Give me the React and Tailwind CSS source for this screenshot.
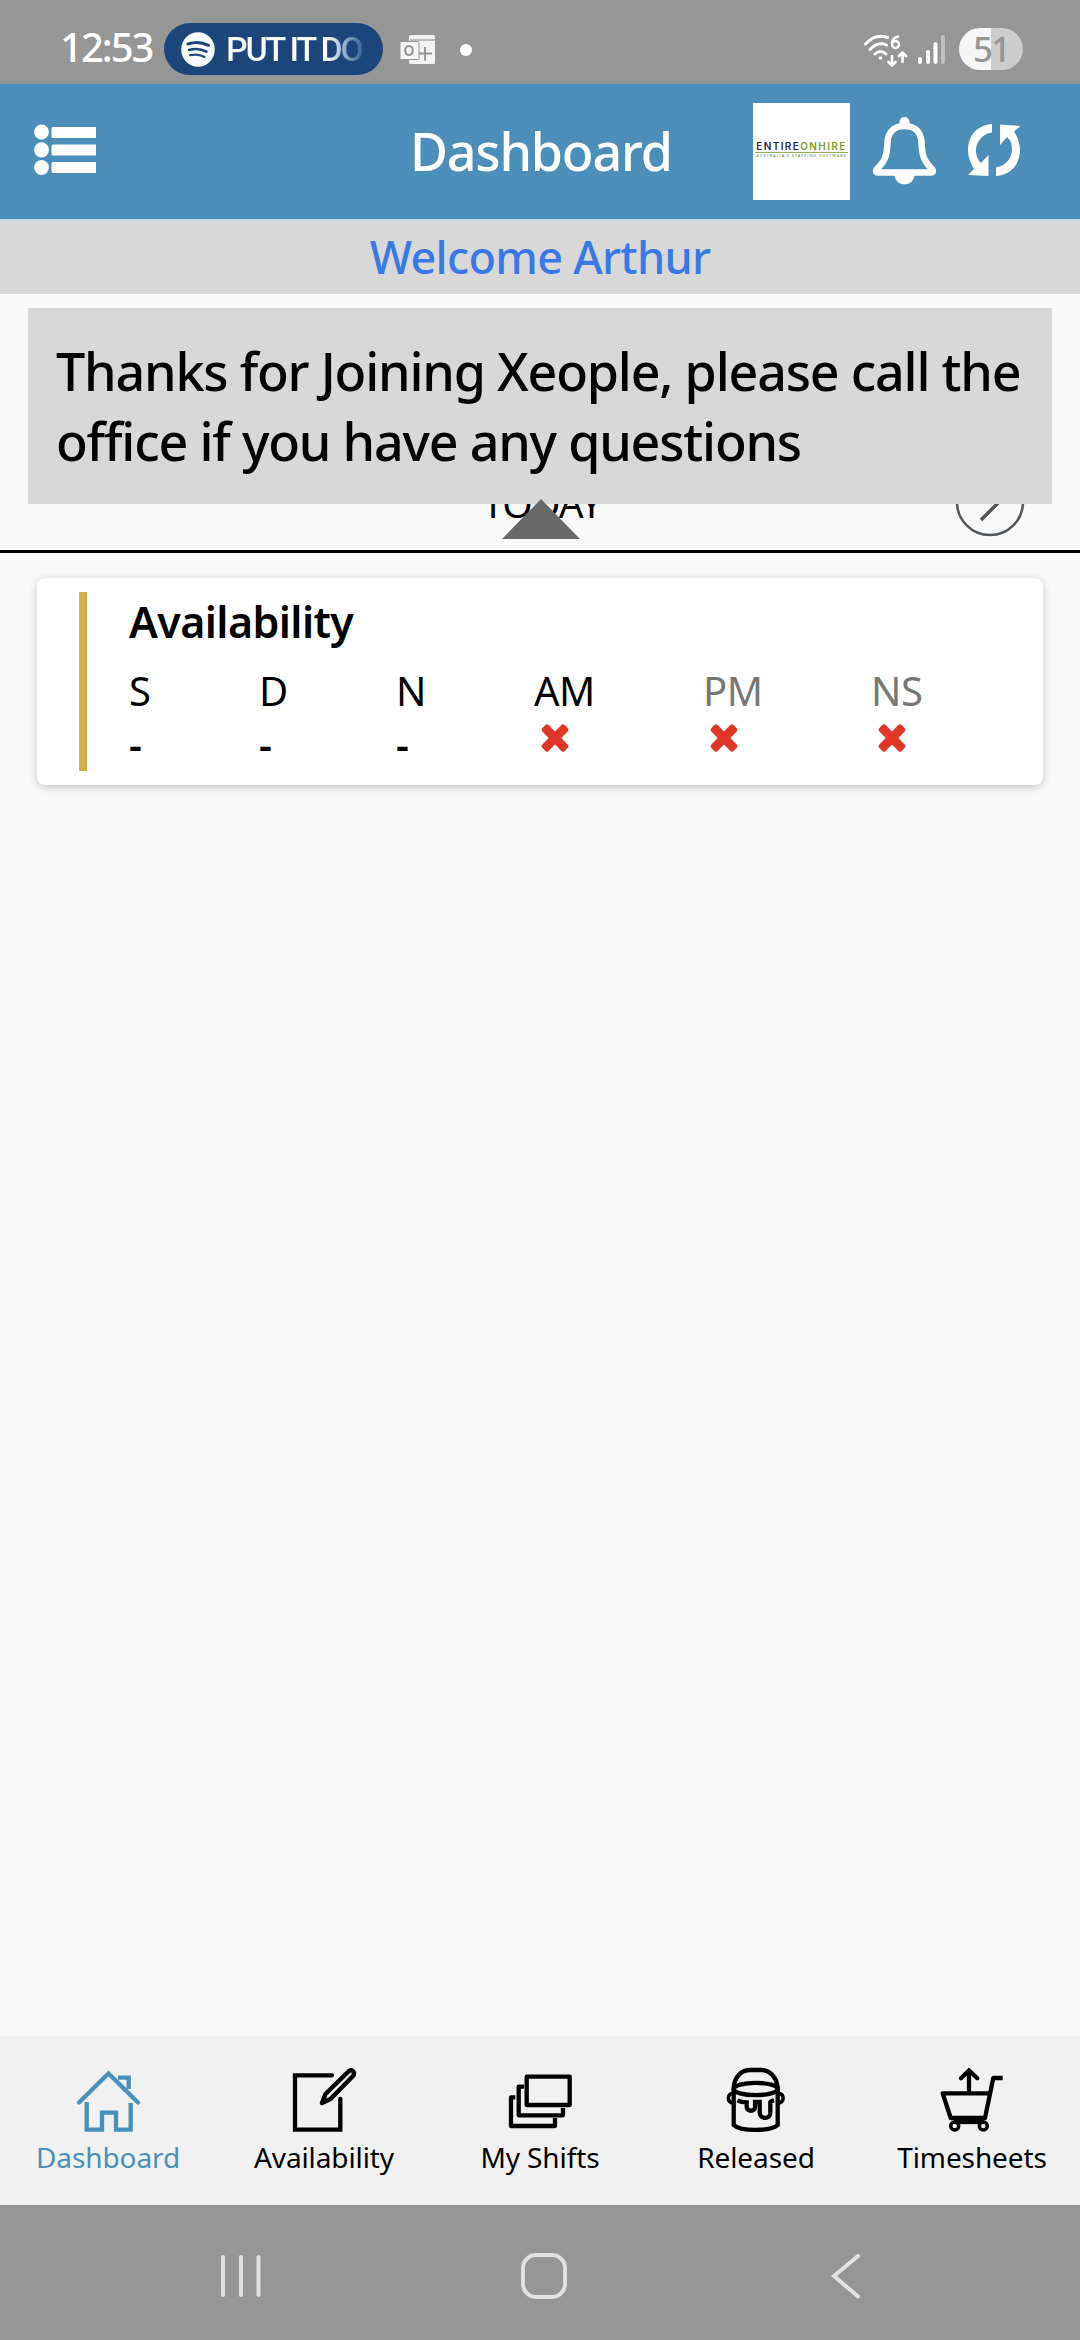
const slots = [
  { name: "S", active: true, value: "-" },
  { name: "D", active: true, value: "-" },
  { name: "N", active: true, value: "-" },
  { name: "AM", active: true, value: "x" },
  { name: "PM", active: false, value: "x" },
  { name: "NS", active: false, value: "x" },
];

function StatusBar() {
  return (
    <div className="flex h-[84px] items-start bg-[#969696] text-white">
      <span className="ml-[60px] mt-[19px] w-[104px] whitespace-nowrap text-[40px] font-medium leading-[56px] tracking-[-2px]">
        12:53
      </span>
      <div className="mt-[23px] flex h-[52px] w-[219px] items-center rounded-full bg-[#1c457c] pl-[17px]">
        <svg className="h-[35px] w-[34px]" viewBox="0 0 34 35" fill="none">
          <ellipse cx="17" cy="17.500" rx="16.800" ry="17.200" fill="#f8feff" />
          <g stroke="#1c457c" strokeLinecap="round">
            <path d="M7 12c7-2.500 14-1.800 20.500 1.300" strokeWidth="3" />
            <path d="M8 18c6-1.800 12-1.200 17.500 1.600" strokeWidth="2.500" />
            <path d="M9 23.300c5-1.300 10-.8 14.500 1.700" strokeWidth="2.100" />
          </g>
        </svg>
        <span className="ml-[11px] whitespace-nowrap bg-gradient-to-r from-[#f4fcff] from-75% to-[#3c6496] bg-clip-text font-['Roboto'] text-[34px] font-medium leading-[48px] tracking-[-2.2px] text-transparent">
          PUT IT DO
        </span>
      </div>
      {/* outlook */}
      <svg className="ml-[17px] mt-[35px] h-[29px] w-[35px]" viewBox="0 0 35 29">
        <path d="M9 1.500q0-1.500 1.500-1.500H33.500Q35 0 35 1.500V27.500Q35 29 33.500 29H10.500Q9 29 9 27.500Z" fill="#f2f2f2" />
        <path d="M10 5H35" stroke="#aaa" strokeWidth="1.500" />
        <path d="M19 18.500H32M25 12V25.500" stroke="#969696" strokeWidth="2" />
        <rect x="0" y="6.500" width="19" height="18" rx="1" fill="#f6f6f6" stroke="#969696" strokeWidth="1" />
        <ellipse cx="9" cy="15.500" rx="3.800" ry="4.500" fill="none" stroke="#969696" strokeWidth="2.200" />
      </svg>
      <div className="ml-[25px] mt-[44px] size-[12px] rounded-full bg-white" />
      <svg className="ml-[392px] mt-[33px] h-[34px] w-[44px]" viewBox="0 0 44 34" fill="none" stroke="#fff" strokeLinecap="round">
        <path d="M1.500 11Q11.500 0 23.500 4.500" strokeWidth="3" />
        <path d="M6 16.500Q14 8 22.500 12" strokeWidth="3" />
        <path d="M11 21Q16.500 16 22 21" strokeWidth="3" />
        <circle cx="16.500" cy="25" r="1.800" fill="#fff" stroke="none" />
        <path d="M34 3.500Q28 5 28 11" strokeWidth="2.500" />
        <circle cx="31.500" cy="11.500" r="3.500" strokeWidth="2.400" />
        <path d="M28 23V32M24.500 29L28 32.500L31.500 29M38.500 29V20M35 23L38.500 19.500L42 23" strokeWidth="2.600" />
      </svg>
      <svg className="ml-[10px] mt-[35px] h-[29px] w-[28px]" viewBox="0 0 28 29">
        <rect x="0" y="22" width="4" height="7" rx="2" fill="#fff" />
        <rect x="8" y="15" width="4" height="14" rx="2" fill="#fff" />
        <rect x="15.500" y="7" width="4" height="22" rx="2" fill="#fff" />
        <rect x="23" y="0" width="4" height="29" rx="2" fill="#c0c0c0" />
      </svg>
      <div className="ml-[13px] mt-[28px] flex h-[42px] w-[64px] items-center justify-center rounded-full bg-gradient-to-r from-[#f6f6f6] from-50% to-[#cdcdcd] to-50%">
        <span className="mb-[2px] text-[35px] font-medium leading-none tracking-[-2px] text-[#969696]">51</span>
      </div>
    </div>
  );
}

function Header() {
  return (
    <div className="flex h-[135px] items-center bg-[#4b8eba] text-white">
      <svg className="mb-[3px] ml-[34px] h-[52px] w-[62px]" viewBox="0 0 62 52" fill="#fff">
        <ellipse cx="7.500" cy="8" rx="7.400" ry="7.600" />
        <ellipse cx="7.500" cy="25.800" rx="7.400" ry="7.600" />
        <ellipse cx="7.500" cy="43.500" rx="7.400" ry="7.600" />
        <path d="M19 3H62V14H19Q17.500 14 17.500 12.500V4.500Q17.500 3 19 3ZM19 20.500H62V31.500H19Q17.500 31.500 17.500 30V22Q17.500 20.500 19 20.500ZM19 38H62V49H19Q17.500 49 17.500 47.500V39.500Q17.500 38 19 38Z" />
      </svg>
      <h1 className="mb-[2px] ml-[314px] w-[343px] whitespace-nowrap text-[52px] font-medium tracking-[-1.2px]">Dashboard</h1>
      <div className="flex h-[97px] w-[97px] flex-col items-center justify-center bg-white pb-[3px]">
        <div className="flex w-[93px] justify-center whitespace-nowrap font-['Inter'] text-[10px] font-semibold leading-[10px] tracking-[1.4px]">
          <span className="text-[#2b2450]">ENTIRE</span>
          <span className="text-[#7f9f2a]">ONHIRE</span>
        </div>
        <div className="mt-[1px] h-px w-[93px] bg-[#98b05a]" />
        <div className="whitespace-nowrap text-[4px] leading-[6px] tracking-[0.9px] text-[#6f8a3a]">
          AUSTRALIA'S STAFFING SOFTWARE
        </div>
      </div>
      <svg className="mb-[2px] ml-[23px] h-[68px] w-[63px]" viewBox="0 0 63 68">
        <circle cx="31.500" cy="5" r="5" fill="#fff" />
        <path d="M31.500 9C20 9 15 16 14.500 25C14 39 12 44 4.500 51.500Q1 55.500 6 55.500H57Q62 55.500 58.500 51.500C51 44 49 39 48.500 25C48 16 43 9 31.500 9Z" fill="none" stroke="#fff" strokeWidth="6.500" />
        <path d="M21 57H42Q40 67.500 31.500 67.500Q23 67.500 21 57Z" fill="#fff" />
      </svg>
      <svg className="mb-[4px] ml-[31px] h-[54px] w-[54px]" viewBox="0 0 54 54" fill="#fff">
        <path d="M25 1V9.500C14 11 6 22 10 34Q11.500 38 14 40L21.500 32V53L1 52L7 46C-5 28 1 3 25 1Z" />
        <path d="M29 53V44.500C40 43 48 32 44 20Q42.500 16 40 14L33 22V1.500L53.500 3L47 8.500C59 26 53 51 29 53Z" />
      </svg>
    </div>
  );
}

function Message() {
  return (
    <div className="relative h-[259px] border-b-[3px] border-black bg-[#f9f9f9]">
      {/* day switcher, mostly hidden by the message */}
      <div className="absolute left-[2px] top-[184px] w-full text-center text-[39px] leading-[50px] tracking-[-0.8px] text-black">TODAY</div>
      <svg className="absolute left-[955px] top-[173px] h-[70px] w-[70px]" viewBox="0 0 70 70" fill="none" stroke="#50555a">
        <circle cx="35" cy="35" r="33" strokeWidth="2.500" />
        <path d="M26 18L44 35L26 53" strokeWidth="3.500" />
      </svg>
      <div className="absolute left-[28px] top-[14px] h-[196px] w-[1024px] whitespace-nowrap bg-[#d8d8d8] px-[28px] py-[28px] text-[52px] font-medium leading-[70px] tracking-[-1.200px] text-black">
        Thanks for Joining Xeople, please call the
        <br />
        office if you have any questions
      </div>
      <svg className="absolute left-[502px] top-[205px] h-[40px] w-[78px]" viewBox="0 0 78 40">
        <path d="M39 0L78 40H0Z" fill="#696969" />
      </svg>
    </div>
  );
}

function Cross() {
  return (
    <svg className="ml-[7px] mt-[6px] size-[28px]" viewBox="0 0 28 28" fill="#e13526">
      <rect x="-2" y="9.500" width="32" height="9" rx="2.500" transform="rotate(46 14 14)" />
      <rect x="-2" y="9.500" width="32" height="9" rx="2.500" transform="rotate(-46 14 14)" />
    </svg>
  );
}

function AvailabilityCard() {
  return (
    <div className="ml-[37px] mt-[25px] flex h-[207px] w-[1006px] rounded-[8px] bg-white pt-[14px] shadow-[0_2px_8px_rgba(0,0,0,0.22)]">
      <div className="ml-[42px] h-[179px] w-[8px] bg-[#d1b04a]" />
      <div className="ml-[42px] text-black">
        <h2 className="text-[43px] font-semibold leading-[60px] tracking-[-0.6px]">Availability</h2>
        <div className="mt-[12px] grid grid-cols-[130px_137px_138px_169px_168px_100px] text-[40px] leading-[54px]">
          {slots.map((slot) => (
            <div key={slot.name} className={slot.active ? "text-black" : "text-[#777777]"}>
              <div className="tracking-[-0.5px]">{slot.name}</div>
              {slot.value === "x" ? <Cross /> : <div className="mt-[7px] font-semibold leading-[40px]">-</div>}
            </div>
          ))}
        </div>
      </div>
    </div>
  );
}

// bottom tab icons, all on a 70 x 70 box
const icons = {
  Dashboard: (
    <>
      <path d="M6 37.500L35.500 8.500L65 37.500" strokeLinecap="round" />
      <path d="M45 12.700H55.700V24" />
      <path d="M13.700 37V64.700H29V47.700H43V64.700H57.700V38" />
    </>
  ),
  Availability: (
    <>
      <path d="M43 10.300H6V64.700H51.300V34" strokeLinecap="round" />
      <path d="M33 38L36.500 29L60 6Q64 4 65 8Q65 10 64 11L41.500 34Z" strokeWidth="4.500" strokeLinejoin="round" />
    </>
  ),
  "My Shifts": (
    <>
      <rect x="21.700" y="11.700" width="43" height="28.300" strokeLinejoin="round" />
      <path d="M19 21.700H13.700V50.300H58V43M10.300 32.300H6V61H50V53" strokeLinejoin="round" />
    </>
  ),
  Released: (
    <>
      <path d="M12.700 26V22C14 11 21 5 29 5H40.500C48 5 55 11 56.700 22V60C50 66.500 19 66.500 12.700 60Z" />
      <ellipse cx="34.700" cy="24" rx="22" ry="6.200" />
      <path d="M12.700 28C5.500 29 5.500 37 12.700 38.500M56.700 28C64 29 64 37 56.700 38.500" strokeWidth="3.500" />
      <path d="M16.500 35.300Q20 37.300 25.700 37.300V42C26 47 34 47 34 42V37H38.700V48C39 54.500 49.300 54.500 49.300 48V37Q50 36 53 35.300" />
    </>
  ),
  Timesheets: (
    <>
      <path d="M65.700 13H56.300L48 53H13.700L5.700 28.300H53" strokeLinejoin="round" />
      <path d="M32 25.500V6M24 13.300L32 5.500L40.300 13.300" strokeLinecap="round" />
      <path d="M17 57H47" />
      <circle cx="17.700" cy="61" r="4" strokeWidth="3.500" />
      <circle cx="46.300" cy="61" r="4" strokeWidth="3.500" />
    </>
  ),
};

function TabBar() {
  return (
    <div className="grid h-[169px] grid-cols-5 bg-[#f1f1f1]">
      {Object.keys(icons).map((name) => (
        <div key={name} className={name === "Dashboard" ? "flex flex-col items-center text-[#4b8eba]" : "flex flex-col items-center text-black"}>
          <svg className="mt-[29px] size-[70px]" viewBox="0 0 70 70" fill="none" stroke="currentColor" strokeWidth="4.300">
            {icons[name]}
          </svg>
          <span className="mt-[3px] whitespace-nowrap text-[28px] leading-[38px] tracking-[-0.1px]">{name}</span>
        </div>
      ))}
    </div>
  );
}

function SystemNav() {
  return (
    <div className="flex h-[135px] items-start bg-[#969696] pt-[48px]">
      <svg className="ml-[220px] h-[46px] w-[42px]" viewBox="0 0 42 46" stroke="#e2e2e2" strokeWidth="4" strokeLinecap="round">
        <path d="M3 4V42M21 4V42M38.500 4V42" />
      </svg>
      <div className="ml-[259px] size-[46px] rounded-[15px] border-[4px] border-[#e2e2e2]" />
      <svg className="ml-[263px] h-[46px] w-[32px]" viewBox="0 0 32 46" fill="none" stroke="#e2e2e2" strokeWidth="4" strokeLinecap="round">
        <path d="M28 3L4 23L28 43.500" />
      </svg>
    </div>
  );
}

export default function App() {
  return (
    <div className="flex h-[2340px] w-[1080px] flex-col overflow-hidden bg-[#f9f9f9] font-['Noto_Sans',sans-serif]">
      <StatusBar />
      <Header />
      <div className="h-[75px] border-t-2 border-[#c5dcea] bg-[#d8d8d8] text-center text-[45px] font-medium leading-[71px] tracking-[-0.7px] text-[#3b78e7]">
        Welcome Arthur
      </div>
      <Message />
      <div className="flex-1">
        <AvailabilityCard />
      </div>
      <TabBar />
      <SystemNav />
    </div>
  );
}
